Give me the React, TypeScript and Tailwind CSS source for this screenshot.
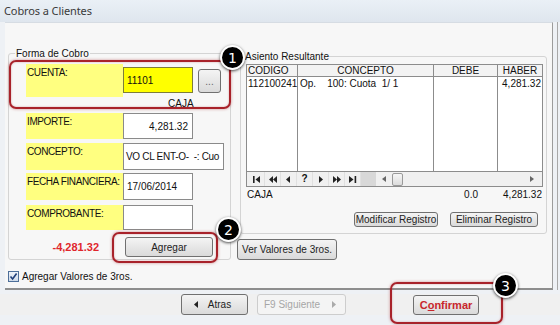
import type { ReactNode } from 'react';

function Badge({ n, className }: { n: string; className: string }) {
  return (
    <div
      className={`absolute w-[25px] h-[25px] rounded-full bg-black border-2 border-white shadow-[0_1px_3px_rgba(0,0,0,0.7)] flex items-center justify-center text-white text-[14px] leading-none tracking-normal font-['DejaVu_Sans',sans-serif] ${className}`}
    >
      {n}
    </div>
  );
}

function Mark({ className }: { className: string }) {
  return (
    <div
      className={`absolute border-2 border-[#a8222a] rounded-[7px] shadow-[0_0_3px_rgba(168,34,42,0.5),inset_0_0_2px_rgba(168,34,42,0.4)] pointer-events-none ${className}`}
    />
  );
}

function Label({ children, className }: { children: ReactNode; className: string }) {
  return (
    <div className={`w-[97px] bg-[#ffff80] pl-[1px] pt-[2px] leading-[13px] tracking-[-0.4px] text-[#111] whitespace-nowrap ${className}`}>
      {children}
    </div>
  );
}

function WinButton({ children, className }: { children: ReactNode; className: string }) {
  return (
    <div
      className={`flex items-center justify-center whitespace-nowrap border border-[#707070] rounded-[3px] bg-linear-to-b from-[#f4f4f4] to-[#dadada] text-[#222] ${className}`}
    >
      {children}
    </div>
  );
}

function NavIcon({ kind }: { kind: string }) {
  if (kind === '?') return <span className="text-[10px] font-bold leading-none">?</span>;
  const paths: Record<string, ReactNode> = {
    first: (
      <>
        <rect x="0" y="0" width="1.6" height="7" />
        <path d="M7 0 L2.5 3.5 L7 7Z" />
      </>
    ),
    prevpage: <path d="M4 0 L0 3.5 L4 7Z M8 0 L4 3.5 L8 7Z" />,
    prev: <path d="M5 0 L1 3.5 L5 7Z" />,
    next: <path d="M2 0 L6 3.5 L2 7Z" />,
    nextpage: <path d="M0 0 L4 3.5 L0 7Z M4 0 L8 3.5 L4 7Z" />,
    last: (
      <>
        <path d="M0 0 L4.5 3.5 L0 7Z" />
        <rect x="5.6" y="0" width="1.6" height="7" />
      </>
    ),
  };
  return (
    <svg width="8" height="7" viewBox="0 0 8 7" fill="#222">
      {paths[kind]}
    </svg>
  );
}

function App() {
  return (
    <div className="relative w-[560px] h-[325px] overflow-hidden bg-[#eef1f5] font-['Liberation_Sans',Arial,sans-serif] text-[10px] text-[#111]">
      {/* Title */}
      <div className="h-[22px] flex items-center pl-[4px] bg-linear-to-b from-[#eaf0f6] to-[#dfe6ee] text-[11px] tracking-[-0.1px] text-[#3a3a3a] font-['Noto_Sans',sans-serif]">
        Cobros a Clientes
      </div>

      <div className="flex">
        <div className="w-[5px]" />
        {/* Panel */}
        <div className="w-[548px] h-[268px] border-t border-t-[#d6dce3] border-r border-r-[#9c9c9c] border-b-2 border-b-[#8e8e8e] bg-[#f7f7f7] flex flex-col">
          <div className="flex">
            {/* Forma de Cobro */}
            <fieldset className="ml-[3px] mt-[24px] w-[223px] border border-[#d4d4d4] rounded-[3px] pb-[2px]">
              <legend className="ml-[6px] px-[1px] leading-[13px]">Forma de Cobro</legend>

              <div className="flex items-start mt-[4px] ml-[17px]">
                <Label className="h-[33px]">CUENTA:</Label>
                <div className="mt-[3px] h-[26px] w-[70px] bg-[#ffff00] border border-[#7d7d3a] flex items-center pl-[3px]">
                  11101
                </div>
                <WinButton className="ml-[5px] mt-[5px] h-[24px] w-[23px] text-[#666]">...</WinButton>
              </div>
              <div className="h-[13px] leading-[13px] ml-[159px]">CAJA</div>

              <div className="flex mt-[3px] ml-[17px]">
                <Label className="h-[26px]">IMPORTE:</Label>
                <div className="h-[26px] w-[70px] bg-white border border-[#8a8a8a] flex items-center justify-end pr-[4px]">
                  4,281.32
                </div>
              </div>
              <div className="flex mt-[4px] ml-[17px]">
                <Label className="h-[27px]">CONCEPTO:</Label>
                <div className="h-[27px] w-[101px] bg-white border border-[#8a8a8a] flex items-center pl-[2px] whitespace-pre tracking-[-0.3px] overflow-hidden">
                  VO CL ENT-O-  -: Cuo
                </div>
              </div>
              <div className="flex mt-[3px] ml-[17px]">
                <Label className="h-[27px]">FECHA FINANCIERA:</Label>
                <div className="h-[27px] w-[70px] bg-white border border-[#8a8a8a] flex items-center pl-[3px]">
                  17/06/2014
                </div>
              </div>
              <div className="flex mt-[5px] ml-[17px]">
                <Label className="h-[25px]">COMPROBANTE:</Label>
                <div className="h-[25px] w-[70px] bg-white border border-[#8a8a8a]" />
              </div>

              <div className="flex items-center mt-[7px]">
                <div className="w-[90px] text-right text-[11px] font-bold text-[#e0262c]">-4,281.32</div>
                <WinButton className="ml-[26px] h-[20px] w-[88px] text-[10px]">Agregar</WinButton>
              </div>
            </fieldset>

            {/* Asiento Resultante */}
            <div className="ml-[9px] mt-[27px] flex flex-col">
              <fieldset className="w-[307px] border border-[#d4d4d4] rounded-[3px] pb-[6px]">
                <legend className="ml-[4px] leading-[13px]">Asiento Resultante</legend>

                <div className="ml-[5px] mt-[1px] w-[297px] border border-[#8c8c8c] bg-white flex flex-col">
                  <div className="grid grid-cols-[51px_136px_64px_44px] h-[12px] leading-[11px] bg-[#f3f3f3] border-b border-[#8c8c8c]">
                    <div className="pl-[1px] border-r border-[#8c8c8c]">CODIGO</div>
                    <div className="text-center border-r border-[#8c8c8c]">CONCEPTO</div>
                    <div className="text-center border-r border-[#8c8c8c]">DEBE</div>
                    <div className="text-center">HABER</div>
                  </div>
                  <div className="grid grid-cols-[51px_136px_64px_44px] h-[94px] leading-[13px]">
                    <div className="pl-[1px] border-r border-[#8c8c8c]">112100241</div>
                    <div className="pl-[2px] whitespace-pre border-r border-[#8c8c8c]">Op.    100: Cuota  1/ 1</div>
                    <div className="border-r border-[#8c8c8c]" />
                    <div className="text-right pr-[1px]">4,281.32</div>
                  </div>
                  <div className="flex h-[15px] border-t border-[#8c8c8c] bg-[#f0f0f0]">
                    <div className="flex pl-[2px]">
                      {['first', 'prevpage', 'prev', '?', 'next', 'nextpage', 'last'].map((k) => (
                        <div key={k} className="w-[16px] h-[14px] flex items-center justify-center border-r border-[#e0e0e0]">
                          <NavIcon kind={k} />
                        </div>
                      ))}
                    </div>
                    <div className="w-[15px] h-[14px] bg-[#d8d8d8]" />
                    <div className="flex-1 h-[14px] flex items-center bg-[#f0f0f0]">
                      <svg width="4" height="6" viewBox="0 0 4 6" className="ml-[6px]" fill="#666">
                        <path d="M4 0 L0 3 L4 6Z" />
                      </svg>
                      <div className="ml-[6px] w-[11px] h-[13px] border border-[#9a9a9a] rounded-[2px] bg-linear-to-b from-[#f6f6f6] to-[#dcdcdc]" />
                      <div className="flex-1" />
                      <svg width="4" height="6" viewBox="0 0 4 6" className="mr-[8px]" fill="#666">
                        <path d="M0 0 L4 3 L0 6Z" />
                      </svg>
                    </div>
                  </div>
                </div>

                <div className="flex h-[13px] leading-[13px] mt-[1px] ml-[5px]">
                  <div className="w-[190px] pl-[1px]">CAJA</div>
                  <div className="w-[42px] text-right">0.0</div>
                  <div className="w-[64px] text-right">4,281.32</div>
                </div>

                <div className="flex mt-[11px] ml-[113px]">
                  <WinButton className="h-[15px] w-[84px]">Modificar Registro</WinButton>
                  <WinButton className="ml-[12px] h-[15px] w-[88px]">Eliminar Registro</WinButton>
                </div>
              </fieldset>
              <WinButton className="-ml-[3px] mt-[5px] h-[21px] w-[100px]">Ver Valores de 3ros.</WinButton>
            </div>
          </div>

          {/* Checkbox */}
          <div className="flex items-center mt-[9px] ml-[3px]">
            <div className="w-[11px] h-[11px] border border-[#4d6f9a] bg-linear-to-b from-[#eef3fa] to-[#cfdbea] flex items-center justify-center">
              <svg width="9" height="9" viewBox="0 0 9 9" fill="none" stroke="#1f3f7a" strokeWidth="1.6">
                <path d="M1.5 4.5 L3.6 7 L7.6 1.5" />
              </svg>
            </div>
            <span className="ml-[3px] text-[10px]">Agregar Valores de 3ros.</span>
          </div>
        </div>
        <div className="w-[4px]" />
        <div className="w-[1px] h-[268px] bg-[#a8a8a8]" />
      </div>

      {/* Bottom buttons */}
      <div className="flex items-start mt-[4px] bg-[#f0f0f0]">
        <WinButton className="ml-[181px] h-[21px] w-[67px]">
          <svg width="4" height="7" viewBox="0 0 4 7" fill="#222" className="mr-[10px]">
            <path d="M4 0 L0 3.5 L4 7Z" />
          </svg>
          <span className="mr-[4px]">Atras</span>
        </WinButton>
        <div className="ml-[9px] h-[21px] w-[89px] flex items-center border border-[#cdcdcd] rounded-[3px] bg-[#f4f4f4] text-[#a6a6a6]">
          <span className="ml-[6px]">F9 Siguiente</span>
          <div className="flex-1" />
          <svg width="4" height="7" viewBox="0 0 4 7" fill="#aaa" className="mr-[9px]">
            <path d="M0 0 L4 3.5 L0 7Z" />
          </svg>
        </div>
        <WinButton className="ml-[67px] mt-[1px] h-[20px] w-[66px] text-[11px] font-bold text-[#c8262c]">
          <span className="text-[#c8262c]">
            C<span className="underline">o</span>nfirmar
          </span>
        </WinButton>
      </div>

      {/* annotations */}
      <Mark className="left-[9px] top-[60px] w-[222px] h-[49px]" />
      <Badge n="1" className="left-[220px] top-[45px]" />
      <Mark className="left-[112px] top-[232px] w-[106px] h-[31px]" />
      <Badge n="2" className="left-[216px] top-[217px]" />
      <Mark className="left-[390px] top-[282px] w-[113px] h-[42px]" />
      <Badge n="3" className="left-[493px] top-[273px]" />
    </div>
  );
}

export default App;
